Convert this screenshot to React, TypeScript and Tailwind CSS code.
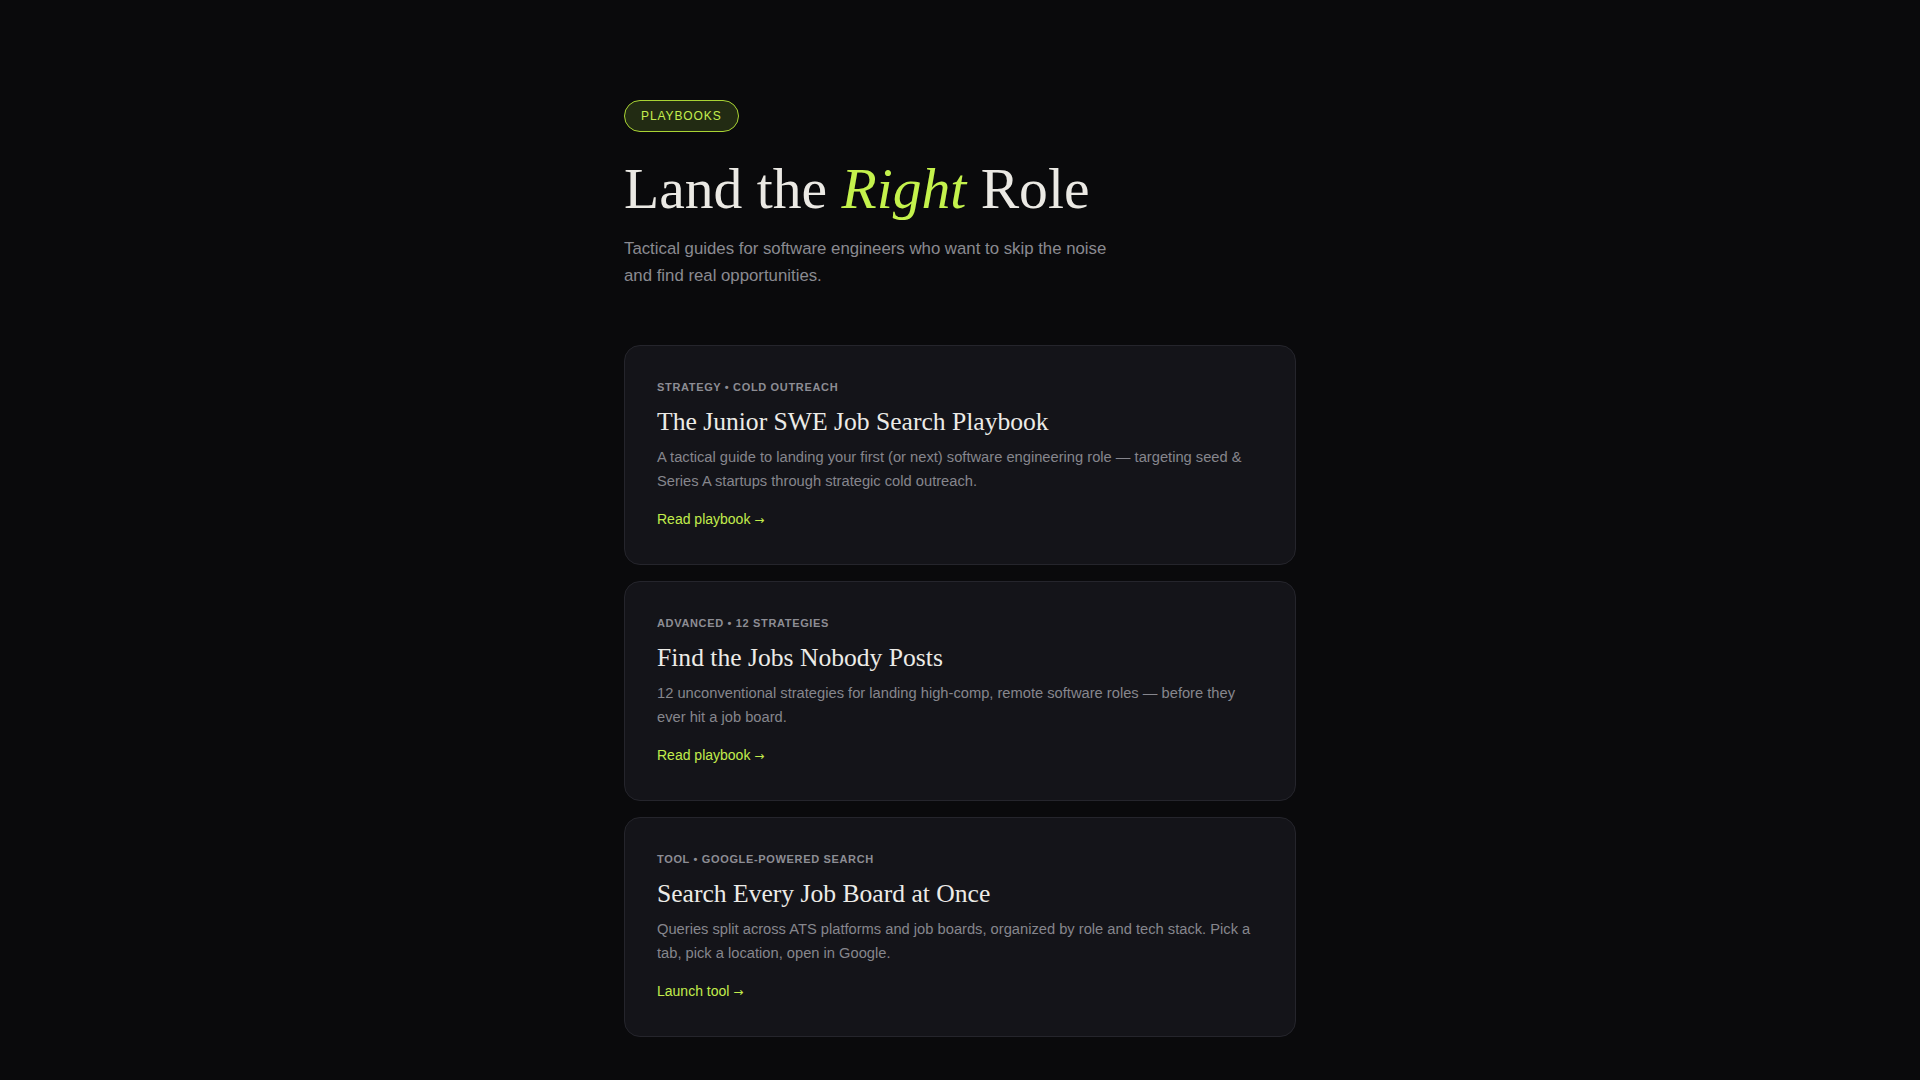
const serif = "font-['Liberation_Serif','Times_New_Roman',serif]";
const sans = "font-['Liberation_Sans',Arial,sans-serif]";

interface Playbook {
  meta: string;
  title: string;
  blurb: string;
  cta: string;
}

const playbooks: Playbook[] = [
  {
    meta: "Strategy • Cold Outreach",
    title: "The Junior SWE Job Search Playbook",
    blurb:
      "A tactical guide to landing your first (or next) software engineering role — targeting seed & Series A startups through strategic cold outreach.",
    cta: "Read playbook",
  },
  {
    meta: "Advanced • 12 Strategies",
    title: "Find the Jobs Nobody Posts",
    blurb:
      "12 unconventional strategies for landing high-comp, remote software roles — before they ever hit a job board.",
    cta: "Read playbook",
  },
  {
    meta: "Tool • Google-Powered Search",
    title: "Search Every Job Board at Once",
    blurb:
      "Queries split across ATS platforms and job boards, organized by role and tech stack. Pick a tab, pick a location, open in Google.",
    cta: "Launch tool",
  },
];

function PlaybookCard({ p }: { p: Playbook }) {
  return (
    <a
      href="#"
      className="block rounded-2xl border border-[#25252c] bg-[#141419] px-8 pt-8 pb-[33px] hover:border-[#34343c] transition-colors"
    >
      <div className={`${sans} text-[11px] leading-[18px] font-bold uppercase tracking-[0.06em] text-[#8d8d94]`}>
        {p.meta}
      </div>
      <h2 className={`${serif} mt-[9px] text-[25.6px] leading-[1.3] text-[#ecebe7]`}>{p.title}</h2>
      <p className={`${sans} mt-[8px] text-[14.7px] leading-[1.62] text-[#86868d]`}>{p.blurb}</p>
      <div className={`${sans} mt-[14px] text-[14px] leading-[22px] text-[#c2ec4c]`}>
        {p.cta} <span className="font-['DejaVu_Sans',sans-serif] text-[12px]">→</span>
      </div>
    </a>
  );
}

export default function App() {
  return (
    <div className="min-h-screen bg-[#0a0a0c]">
      <main className="mx-auto max-w-2xl pt-[100px] pb-10">
        <span
          className={`${sans} inline-flex h-8 items-center rounded-full border border-[#a9d434] bg-[#222b13] px-4 text-[12px] uppercase tracking-[0.075em] text-[#c4ee4e]`}
        >
          Playbooks
        </span>
        <h1 className={`${serif} mt-[25px] text-[57.6px] leading-[1.1] text-[#ebe9e4]`}>
          Land the <em className="italic text-[#c4f24c]">Right</em> Role
        </h1>
        <p className={`${sans} mt-[16px] max-w-[500px] text-[16.8px] leading-[1.6] text-[#8a8a91]`}>
          Tactical guides for software engineers who want to skip the noise and find real opportunities.
        </p>
        <div className="mt-[55px] flex flex-col gap-4">
          {playbooks.map((p) => (
            <PlaybookCard key={p.title} p={p} />
          ))}
        </div>
      </main>
    </div>
  );
}
